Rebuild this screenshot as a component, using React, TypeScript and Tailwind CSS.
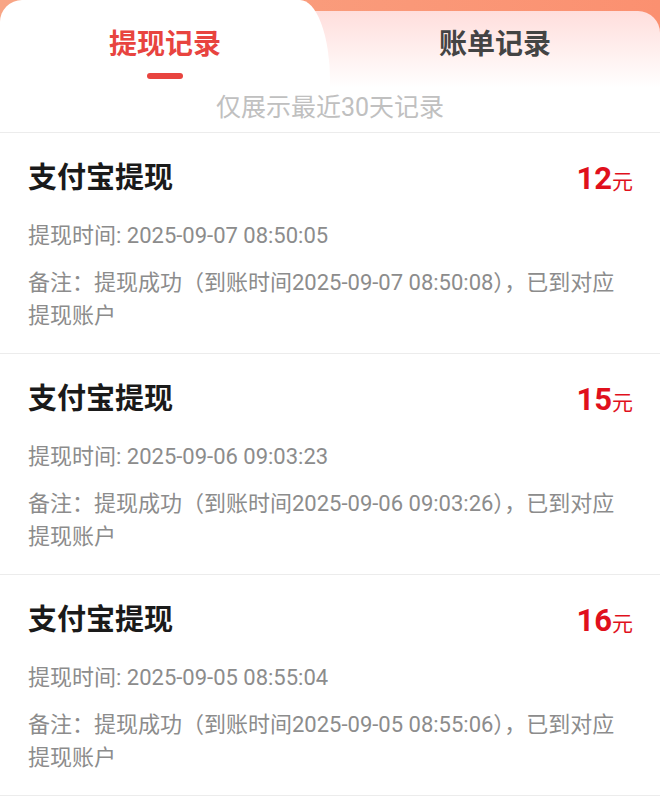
import React from "react";

const records = [
  { amount: "12", time: "2025-09-07 08:50:05", arrive: "2025-09-07 08:50:08" },
  { amount: "15", time: "2025-09-06 09:03:23", arrive: "2025-09-06 09:03:26" },
  { amount: "16", time: "2025-09-05 08:55:04", arrive: "2025-09-05 08:55:06" },
];

const font = { fontFamily: "Roboto, 'Noto Sans CJK SC', sans-serif" };

export default function App() {
  return (
    <div className="w-[660px] min-h-[800px] bg-white" style={font}>
      <div className="bg-gradient-to-r from-[#f8a585] to-[#fb9070]">
        <div className="flex h-[88px]">
          <div className="relative z-10 flex w-[330px] shrink-0 flex-col items-center rounded-tl-[22px] rounded-tr-[30px_80px] bg-white pt-[27px]">
            <div className="text-[28px] font-bold leading-[36px] text-[#e8443f]">提现记录</div>
            <div className="mt-[10px] h-[6px] w-[36px] rounded-full bg-[#e8443f]" />
          </div>
          <div className="-ml-[40px] mt-[11px] flex flex-1 flex-col items-center rounded-tr-[22px] bg-gradient-to-b from-[#ffdedc] to-white pl-[40px] pt-[16px]">
            <div className="text-[28px] font-bold leading-[36px] text-[#444444]">账单记录</div>
          </div>
        </div>
        <div className="flex h-[44px] items-start justify-center bg-white pt-[2px]">
          <div className="text-[25px] leading-[36px] text-[#c0c0c0]">仅展示最近30天记录</div>
        </div>
      </div>
      <div className="border-t border-[#ececec]">
        {records.map((r, i) => (
          <div key={i} className="border-b border-[#ececec] pl-[28px] pr-[27px] pb-[21px] pt-[26px]">
            <div className="flex h-[40px] items-center justify-between">
              <div className="text-[29px] font-bold text-[#1a1a1a]">支付宝提现</div>
              <div className="flex items-baseline text-[#e0101c]">
                <span className="text-[31px] font-bold">{r.amount}</span>
                <span className="text-[21px]">元</span>
              </div>
            </div>
            <div className="mt-[22px] text-[22px] leading-[30px] text-[#8c8c8c]">
              {`提现时间: ${r.time}`}
            </div>
            <div className="mt-[15px] text-[22px] leading-[33px] text-[#8c8c8c]">
              {`备注：提现成功（到账时间${r.arrive}），已到对应提现账户`}
            </div>
          </div>
        ))}
      </div>
    </div>
  );
}
